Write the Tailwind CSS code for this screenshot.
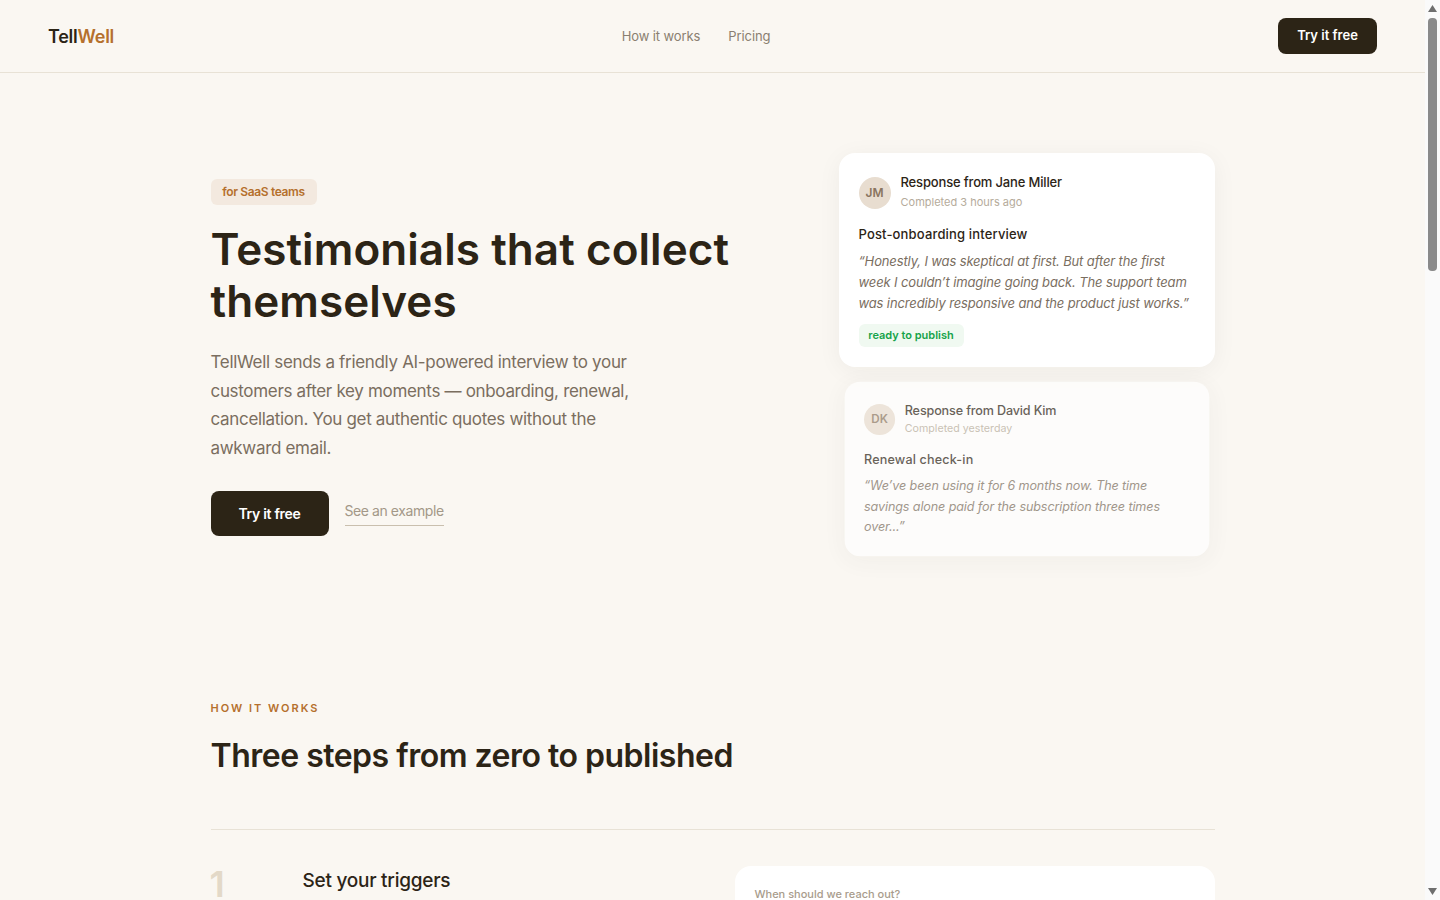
<!DOCTYPE html>
<html>
<head>
<meta charset="utf-8">
<script src="https://cdn.jsdelivr.net/npm/@tailwindcss/browser@4"></script>
</head>
<body class="bg-[#faf7f2] font-['Inter',sans-serif] text-[#2c2416] h-[900px] overflow-hidden">
<div class="flex h-[900px]">
<div class="flex-1 min-w-0 overflow-hidden">
<header class="h-[73px] border-b border-[#e8e2d6] pl-12 pr-12 flex items-center justify-between">
<div class="text-[18px] font-semibold tracking-[-0.25px] pt-[1px]">Tell<span class="text-[#b5702d]">Well</span></div>
<nav class="flex gap-7 text-[13px] tracking-[-0.1px] text-[#8a7f70] pt-[2px]"><span>How it works</span><span>Pricing</span></nav>
<button class="h-9 w-[99px] rounded-lg bg-[#2c2416] text-white text-[13px] font-semibold">Try it free</button>
</header>
<main class="w-[1004px] mx-auto">
<section class="pt-20 flex justify-between h-[560px]">
<div class="w-[530px] pt-[26px]">
<span class="flex w-[106px] h-[26px] items-center justify-center bg-[#f3e9df] text-[#b5702d] text-xs tracking-[-0.35px] font-semibold rounded-md">for SaaS teams</span>
<h1 class="mt-[18px] text-[44px] leading-[52px] tracking-[0.07px] font-semibold">Testimonials that collect themselves</h1>
<p class="mt-[21px] w-[440px] text-[17px] tracking-[-0.32px] leading-[28.6px] text-[#7a6e5f]">TellWell sends a friendly AI-powered interview to your customers after key moments — onboarding, renewal, cancellation. You get authentic quotes without the awkward email.</p>
<div class="mt-[29px] flex items-center gap-4">
<button class="w-[118px] h-[45px] rounded-lg bg-[#2c2416] text-white text-[14px] tracking-[-0.3px] font-semibold">Try it free</button>
<span class="text-[14px] tracking-[-0.42px] text-[#a39888] border-b border-[#c9bfae] pb-1 mb-[1px]">See an example</span>
</div>
</div>
<div class="w-[376px] flex flex-col items-center gap-3">
<div class="w-[376px] shrink-0 bg-white rounded-2xl p-5 h-[214px] shadow-[0_4px_24px_rgba(44,36,22,0.05)]">
<div class="flex items-center gap-[10px] h-[39px]">
<div class="size-8 rounded-full bg-[#e8ddd0] flex items-center justify-center text-xs font-semibold text-[#8a7560]">JM</div>
<div class="-mt-[2px]"><div class="text-[13px] tracking-[-0.16px] font-medium leading-5">Response from Jane Miller</div><div class="text-[11px] text-[#b5ab9b] leading-5">Completed 3 hours ago</div></div>
</div>
<div class="mt-3 text-[13px] tracking-[0.16px] font-medium leading-5">Post-onboarding interview</div>
<p class="mt-[7px] text-[13px] tracking-[-0.13px] leading-[21px] italic text-[#7a6e5f]">“Honestly, I was skeptical at first. But after the first week I couldn’t imagine going back. The support team was incredibly responsive and the product just works.”</p>
<span class="mt-[10px] flex w-[105px] h-[23px] items-center justify-center bg-[#f0f9f1] text-[#16a34a] text-[11px] font-semibold rounded-md">ready to publish</span>
</div>
<div class="w-[376px] shrink-0 bg-white rounded-2xl px-5 pt-[19px] pb-5 h-[180px] scale-[0.97] opacity-70 shadow-[0_4px_24px_rgba(44,36,22,0.05)]">
<div class="flex items-center gap-[10px] h-[39px]">
<div class="size-8 rounded-full bg-[#e8ddd0] flex items-center justify-center text-xs font-semibold text-[#8a7560]">DK</div>
<div class="-mt-[2px]"><div class="text-[13px] tracking-[-0.16px] font-medium leading-5">Response from David Kim</div><div class="text-[11px] text-[#b5ab9b] leading-[18px]">Completed yesterday</div></div>
</div>
<div class="mt-3 text-[13px] tracking-[0.16px] font-medium leading-5">Renewal check-in</div>
<p class="mt-[7px] text-[13px] tracking-[-0.13px] leading-[21px] italic text-[#7a6e5f]">“We’ve been using it for 6 months now. The time savings alone paid for the subscription three times over...”</p>
</div>
</div>
</section>
<section class="pt-[67px]">
<div class="text-[11px] font-semibold tracking-[2px] text-[#b5702d]">HOW IT WORKS</div>
<h2 class="mt-[19px] text-[32px] leading-10 font-semibold tracking-[-0.5px]">Three steps from zero to published</h2>
<div class="mt-[53px] border-t border-[#e8e2d6] pt-9 flex">
<div class="w-[92px] text-[36px] leading-[36px] font-semibold text-[#e3d9c8] -ml-[1px] mr-[1px]">1</div>
<div class="w-[432px] text-[19px] tracking-[-0.25px] font-medium pt-[1px]">Set your triggers</div>
<div class="w-[480px] h-[200px] bg-white rounded-2xl p-5 text-[11px] font-medium text-[#a89c8c]">When should we reach out?</div>
</div>
</section>
</main>
</div>
<div class="w-[15px] h-[900px] bg-[#fafafa] relative shrink-0">
<svg class="absolute left-[3px] top-[5px]" width="9" height="7" viewBox="0 0 9 7"><path d="M4.5 0 L9 7 L0 7 Z" fill="#6e6e6e"/></svg>
<div class="absolute left-[3px] top-[18px] w-[9px] h-[253px] rounded bg-[#8a8a8a]"></div>
<svg class="absolute left-[3px] top-[888px]" width="9" height="7" viewBox="0 0 9 7"><path d="M0 0 L9 0 L4.5 7 Z" fill="#6e6e6e"/></svg>
</div>
</div>
</body>
</html>
